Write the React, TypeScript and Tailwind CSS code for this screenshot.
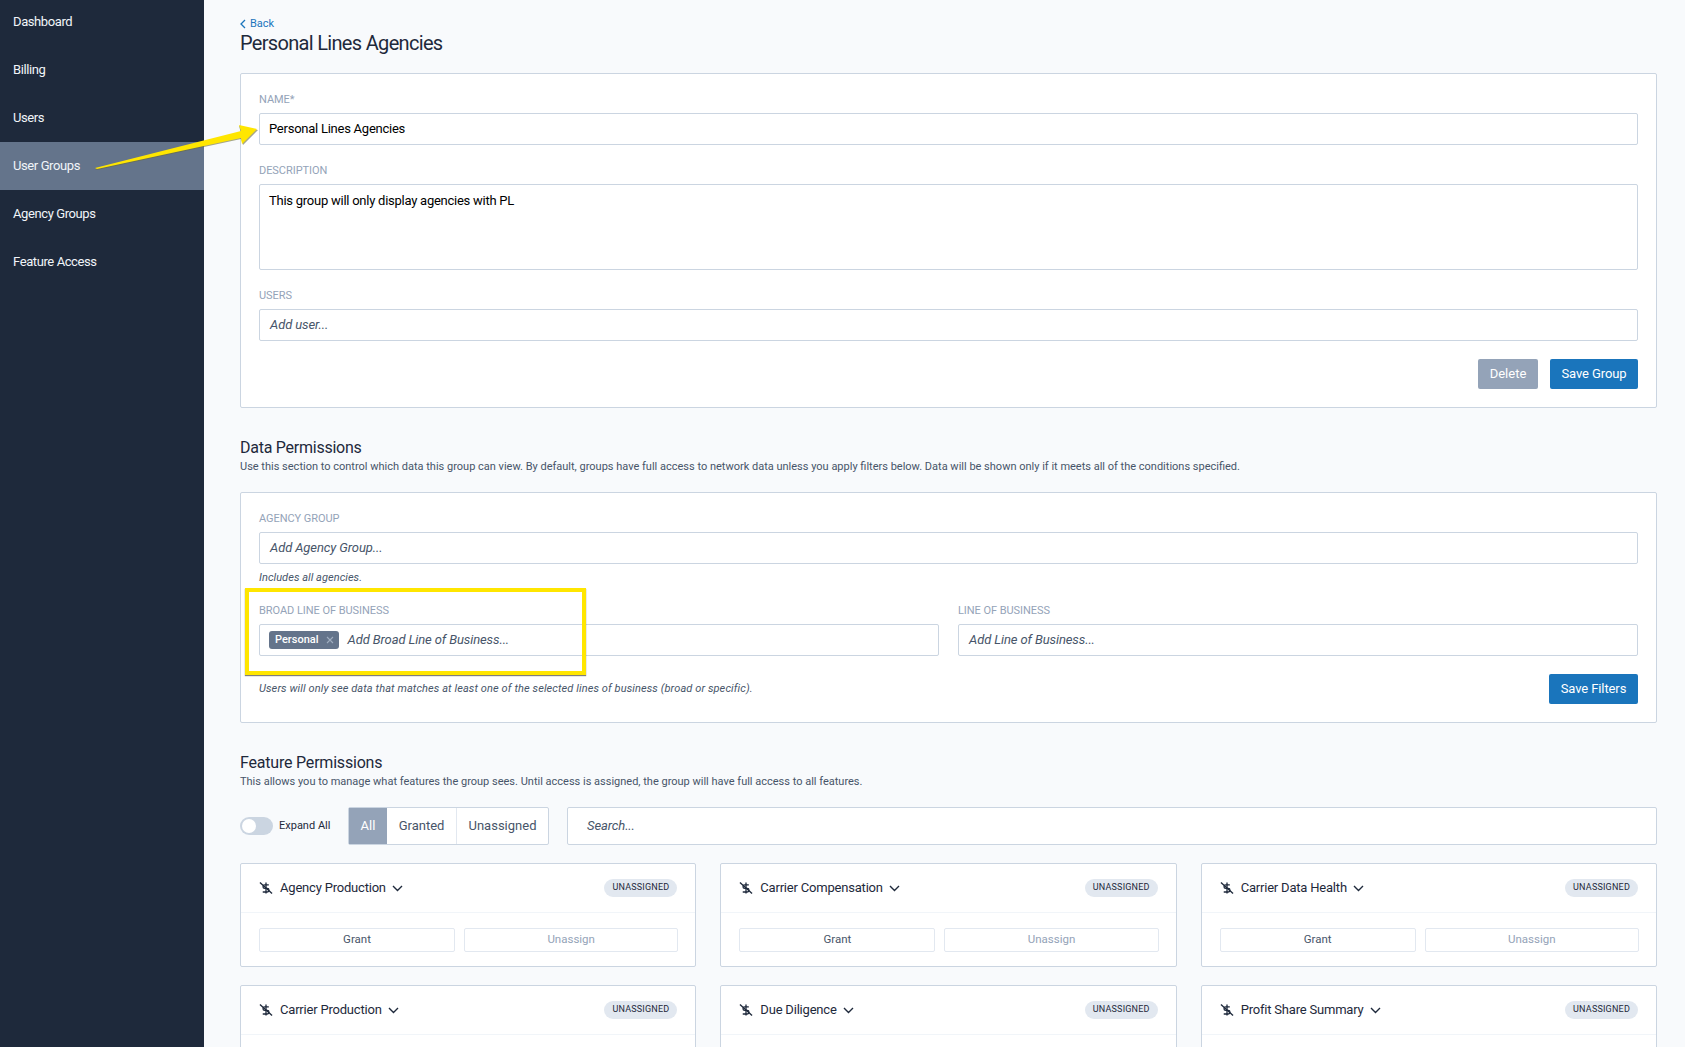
const navItems = ["Dashboard", "Billing", "Users", "User Groups", "Agency Groups", "Feature Access"];

const features = [
  "Agency Production",
  "Carrier Compensation",
  "Carrier Data Health",
  "Carrier Production",
  "Due Diligence",
  "Profit Share Summary",
];

const Label = ({ children }: { children: React.ReactNode }) => (
  <div className="text-[11px] leading-[14px] tracking-[-0.05px] uppercase text-[#94a3b8] mb-[6px]">{children}</div>
);

const Field = ({ placeholder, value }: { placeholder?: string; value?: string }) => (
  <div className="h-[32px] flex items-center bg-white border border-[#cbd5e1] rounded-[2px] text-[13px]">
    {value ? (
      <span className="pl-[9px] text-black tracking-[-0.25px]">{value}</span>
    ) : (
      <span className="pl-[10px] italic text-[#475569] tracking-[-0.1px]">{placeholder}</span>
    )}
  </div>
);

const DollarOff = () => (
  <svg width="14" height="14" viewBox="0 0 15 15" fill="none" stroke="#1e293b" strokeWidth="1.4" className="shrink-0">
    <path d="M1 1.5 14 13.5" />
    <path d="M7.5 1.5v12" />
    <path d="M10.5 4.2H6.2a1.9 1.9 0 0 0 0 3.8h2.6a1.9 1.9 0 0 1 0 3.8H4" />
  </svg>
);

const Chevron = () => (
  <svg width="11" height="7" viewBox="0 0 11 7" fill="none" stroke="#1e293b" strokeWidth="1.4" className="ml-[6px]">
    <path d="M1 1l4.5 4.5L10 1" />
  </svg>
);

const FeatureCard = ({ name }: { name: string }) => (
  <div className="bg-white border border-[#cbd5e1] rounded-[2px] h-[104px]">
    <div className="h-[49px] flex items-center justify-between px-[18px] border-b border-[#f1f5f9]">
      <div className="flex items-center text-[13px] tracking-[-0.2px] text-[#1e293b]">
        <DollarOff />
        <span className="ml-[7px]">{name}</span>
        <Chevron />
      </div>
      <span className="h-[18px] px-[8px] flex items-center rounded-full bg-[#e2e8f0] text-[9px] text-[#1e293b] tracking-[0.2px]">
        UNASSIGNED
      </span>
    </div>
    <div className="flex gap-[9px] pl-[18px] pr-[17px] pt-[15px]">
      <div className="w-[196px] h-[24px] flex items-center justify-center border border-[#e2e8f0] rounded-[2px] text-[11.5px] text-[#475569]">
        Grant
      </div>
      <div className="flex-1 h-[24px] flex items-center justify-center border border-[#e2e8f0] rounded-[2px] text-[11.5px] text-[#94a3b8]">
        Unassign
      </div>
    </div>
  </div>
);

export default function App() {
  return (
    <div className="relative flex h-screen overflow-hidden bg-[#f8fafc] font-['Roboto',sans-serif]">
      {/* sidebar */}
      <div className="w-[204px] shrink-0 bg-[#1e293b]">
        <div className="-mt-[2px]">
          {navItems.map((item) => (
            <div
              key={item}
              className={`h-[48px] flex items-center pl-[13px] text-[13px] tracking-[-0.4px] text-[#f1f5f9] ${item === "User Groups" ? "bg-[#64748b]" : ""}`}
            >
              {item}
            </div>
          ))}
        </div>
      </div>

      {/* main */}
      <div className="flex-1 pl-[36px] pr-[28px] pt-[17px]">
        <div className="flex items-center text-[11px] leading-[14px] text-[#1a75bc]">
          <svg width="6" height="10" viewBox="0 0 6 10" fill="none" stroke="#1a75bc" strokeWidth="1.3" className="mr-[4px]">
            <path d="M5 1 1 5l4 4" />
          </svg>
          Back
        </div>
        <h1 className="text-[20px] leading-[26px] -mt-[1px] tracking-[-0.68px] text-[#1e293b]">Personal Lines Agencies</h1>

        <div className="mt-[17px] h-[335px] bg-white border border-[#cbd5e1] rounded-[2px] px-[18px] pt-[19px]">
          <Label>Name*</Label>
          <Field value="Personal Lines Agencies" />
          <div className="mt-[19px]">
            <Label>Description</Label>
            <div className="h-[86px] px-[9px] pt-[6px] bg-white border border-[#cbd5e1] rounded-[2px] text-[13px] tracking-[-0.25px] text-black">
              This group will only display agencies with PL
            </div>
          </div>
          <div className="mt-[19px]">
            <Label>Users</Label>
            <Field placeholder="Add user..." />
          </div>
          <div className="flex justify-end gap-[12px] mt-[18px]">
            <button className="w-[60px] h-[30px] rounded-[2px] bg-[#94a3b8] text-white text-[13px]">Delete</button>
            <button className="w-[88px] h-[30px] rounded-[2px] bg-[#1a75bc] text-white text-[13px] tracking-[-0.1px]">Save Group</button>
          </div>
        </div>

        <h2 className="mt-[30px] text-[16px] leading-[20px] tracking-[-0.25px] text-[#1e293b]">Data Permissions</h2>
        <p className="mt-[1px] text-[11px] leading-[16px] text-[#475569]">
          Use this section to control which data this group can view. By default, groups have full access to network data unless you apply filters below. Data will be shown only if it meets all of the conditions specified.
        </p>

        <div className="mt-[17px] h-[231px] bg-white border border-[#cbd5e1] rounded-[2px] px-[18px] pt-[19px]">
          <Label>Agency Group</Label>
          <Field placeholder="Add Agency Group..." />
          <div className="mt-[7px] text-[11px] leading-[14px] tracking-[0.05px] italic text-[#475569]">Includes all agencies.</div>
          <div className="mt-[19px] grid grid-cols-2 gap-[19px]">
            <div>
              <Label>Broad Line of Business</Label>
              <div className="h-[32px] flex items-center pl-[9px] bg-white border border-[#cbd5e1] rounded-[2px] text-[13px]">
                <span className="h-[18px] pl-[6px] pr-[5px] flex items-center gap-[7px] rounded-[3px] bg-[#64748b] text-white text-[11px] font-medium">
                  Personal
                  <svg width="8" height="8" viewBox="0 0 8 8" stroke="#a0aec0" strokeWidth="1.1">
                    <path d="M1 1l6 6M7 1 1 7" />
                  </svg>
                </span>
                <span className="ml-[9px] italic text-[#475569] tracking-[-0.1px]">Add Broad Line of Business...</span>
              </div>
            </div>
            <div>
              <Label>Line of Business</Label>
              <Field placeholder="Add Line of Business..." />
            </div>
          </div>
          <div className="mt-[18px] flex items-center justify-between">
            <span className="text-[11px] italic tracking-[0.1px] text-[#475569]">
              Users will only see data that matches at least one of the selected lines of business (broad or specific).
            </span>
            <button className="w-[89px] h-[30px] rounded-[2px] bg-[#1a75bc] text-white text-[13px] tracking-[-0.1px]">Save Filters</button>
          </div>
        </div>

        <h2 className="mt-[30px] text-[16px] leading-[20px] tracking-[-0.2px] text-[#1e293b]">Feature Permissions</h2>
        <p className="mt-[1px] text-[11px] leading-[16px] text-[#475569]">
          This allows you to manage what features the group sees. Until access is assigned, the group will have full access to all features.
        </p>

        <div className="mt-[17px] flex items-center h-[38px]">
          <div className="w-[33px] h-[18px] rounded-full bg-[#cbd5e1] p-[2px]">
            <div className="w-[14px] h-[14px] rounded-full bg-white" />
          </div>
          <span className="ml-[6px] pt-[1px] w-[51px] whitespace-nowrap text-[11px] text-[#1e293b]">Expand All</span>
          <div className="ml-[18px] h-full flex border border-[#cbd5e1] rounded-[2px] bg-white text-[13px] text-[#475569]">
            <div className="w-[38px] flex items-center justify-center bg-[#94a3b8] text-white">All</div>
            <div className="w-[70px] flex items-center justify-center border-r border-[#e2e8f0]">Granted</div>
            <div className="w-[91px] flex items-center justify-center">Unassigned</div>
          </div>
          <div className="ml-[18px] flex-1 h-full flex items-center pl-[19px] bg-white border border-[#cbd5e1] rounded-[2px] text-[13px] tracking-[-0.1px] italic text-[#475569]">
            Search...
          </div>
        </div>

        <div className="mt-[18px] grid grid-cols-3 gap-x-[24px] gap-y-[18px]">
          {features.map((name) => (
            <FeatureCard key={name} name={name} />
          ))}
        </div>
      </div>

      {/* annotations drawn over the screenshot */}
      <svg width="270" height="60" viewBox="0 0 270 60" className="absolute left-[90px] top-[120px] pointer-events-none">
        <path d="M5 49 151 13 149 6 168 10 153 25 151 19 7 50Z" fill="#6b6a3a" opacity="0.6" />
        <path d="M5 48 151 11 149 5 167 9 152 24 151 18 7 49Z" fill="#ffe600" />
      </svg>
      <div className="absolute left-[245px] top-[588px] w-[341px] h-[87px] border-[4px] border-[#ffe600] shadow-[0_1px_1px_rgba(0,0,0,0.5)] pointer-events-none" />
    </div>
  );
}
